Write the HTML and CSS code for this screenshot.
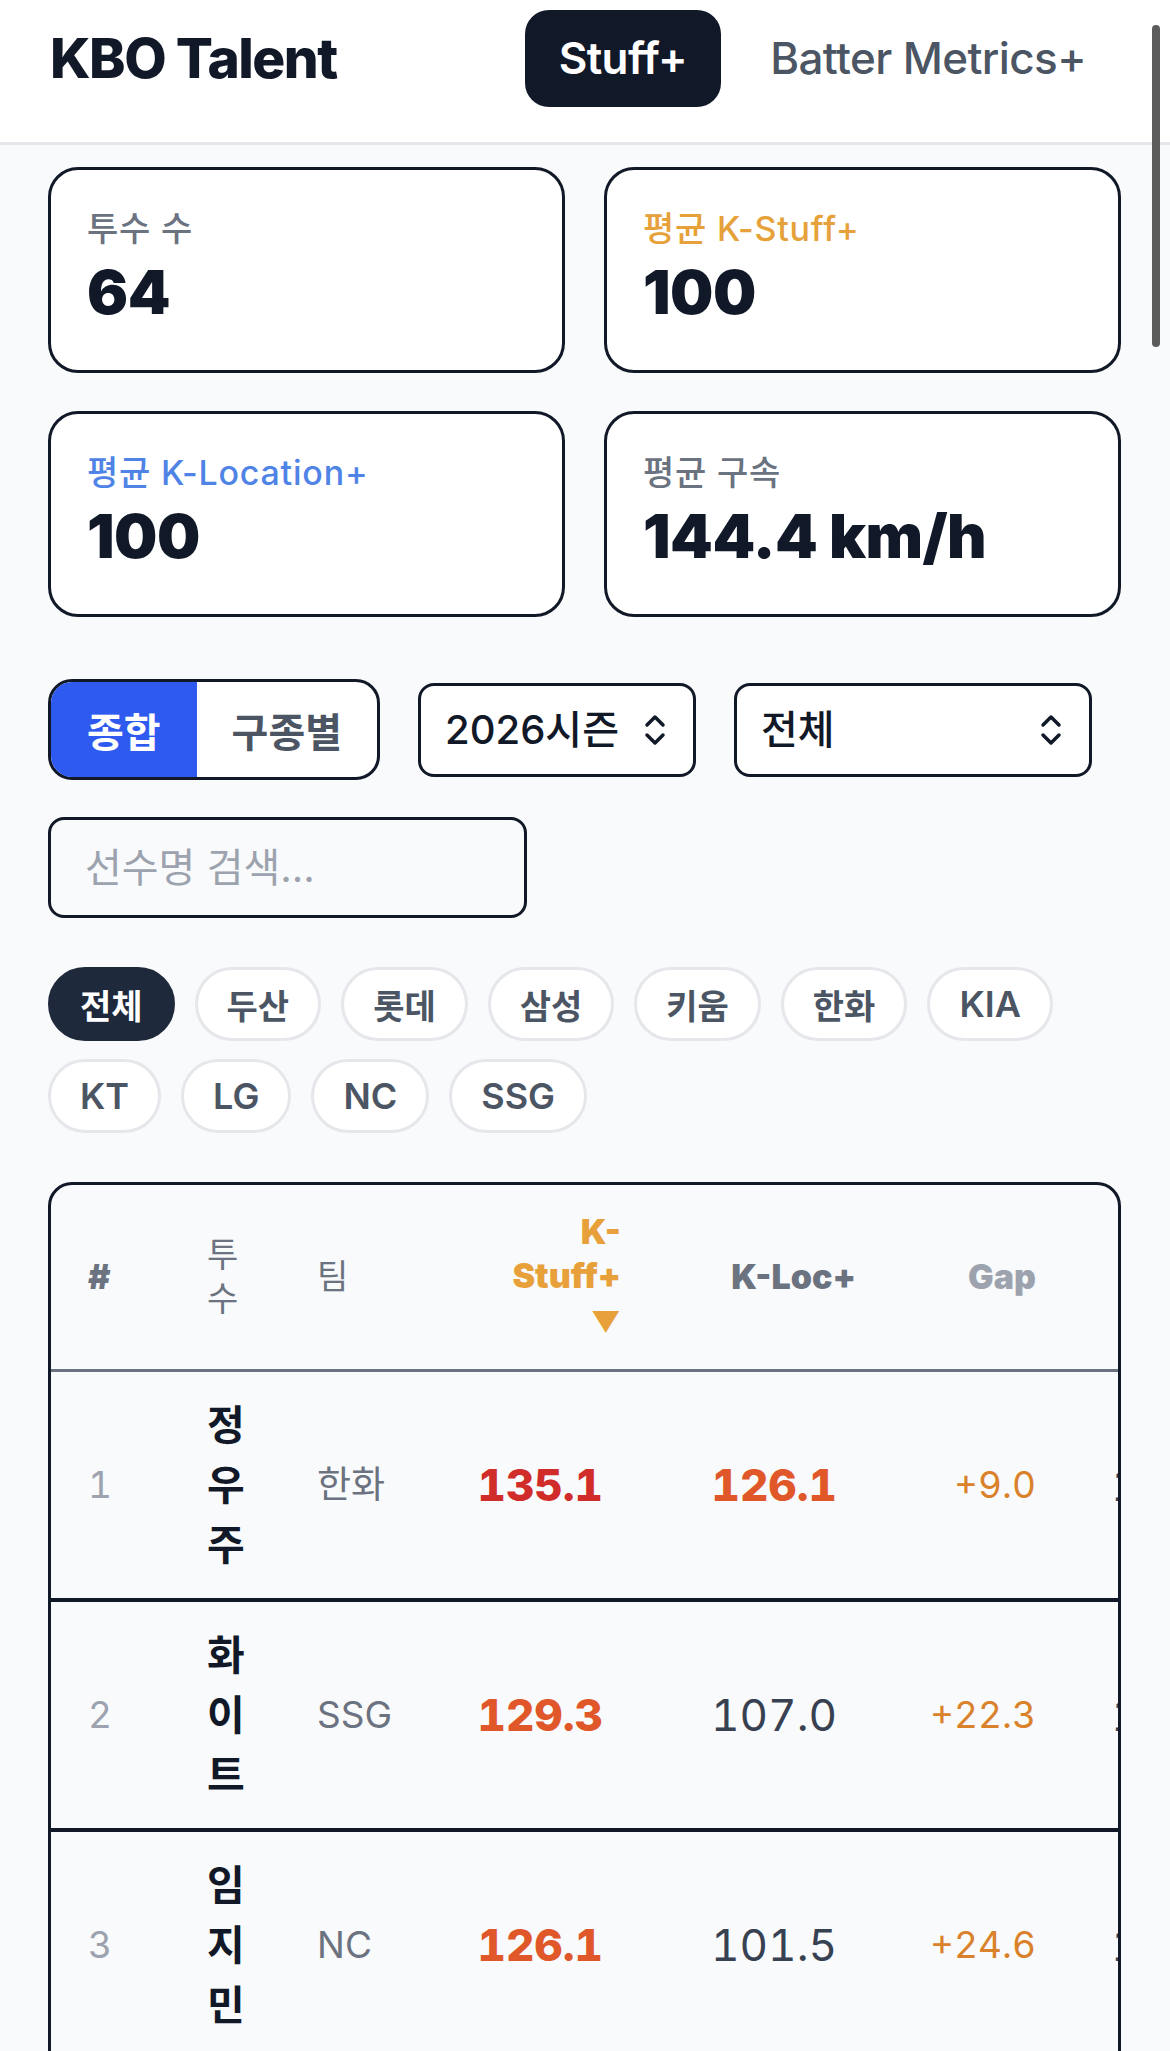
FILE: index.html
```html
<!DOCTYPE html>
<html lang="ko">

<head>
    <meta charset="UTF-8">
    <meta name="viewport" content="width=device-width, initial-scale=1.0">
    <title>KBO Talent - Stuff+</title>
    <link rel="stylesheet" href="styles.css">
</head>

<body>

    <header class="top-bar">
        <div class="brand">KBO Talent</div>
        <nav class="nav">
            <a class="nav-link active" href="#">Stuff+</a>
            <a class="nav-link" href="#">Batter Metrics+</a>
        </nav>
    </header>

    <div class="scroll-indicator"></div>

    <main class="page">

        <section class="stat-grid">
            <div class="stat-card">
                <div class="stat-label">투수 수</div>
                <div class="stat-value">64</div>
            </div>
            <div class="stat-card">
                <div class="stat-label stuff">평균 K-Stuff+</div>
                <div class="stat-value">100</div>
            </div>
            <div class="stat-card">
                <div class="stat-label location">평균 K-Location+</div>
                <div class="stat-value">100</div>
            </div>
            <div class="stat-card">
                <div class="stat-label">평균 구속</div>
                <div class="stat-value">144.4 km/h</div>
            </div>
        </section>

        <section class="controls">
            <div class="segmented">
                <button class="seg-btn active">종합</button>
                <button class="seg-btn">구종별</button>
            </div>
            <div class="select season">
                <select>
                    <option>2026시즌</option>
                    <option>2025시즌</option>
                </select>
                <svg width="24" height="34" viewBox="0 0 24 34" fill="none" stroke="#111827" stroke-width="3.5" stroke-linecap="round" stroke-linejoin="round">
                    <path d="M4 12 L12 4 L20 12" />
                    <path d="M4 22 L12 30 L20 22" />
                </svg>
            </div>
            <div class="select pitch">
                <select>
                    <option>전체</option>
                </select>
                <svg width="24" height="34" viewBox="0 0 24 34" fill="none" stroke="#111827" stroke-width="3.5" stroke-linecap="round" stroke-linejoin="round">
                    <path d="M4 12 L12 4 L20 12" />
                    <path d="M4 22 L12 30 L20 22" />
                </svg>
            </div>
        </section>

        <input class="search" type="text" placeholder="선수명 검색...">

        <section class="team-chips">
            <button class="chip active">전체</button>
            <button class="chip">두산</button>
            <button class="chip">롯데</button>
            <button class="chip">삼성</button>
            <button class="chip">키움</button>
            <button class="chip">한화</button>
            <button class="chip en">KIA</button>
            <button class="chip en">KT</button>
            <button class="chip en">LG</button>
            <button class="chip en">NC</button>
            <button class="chip en">SSG</button>
        </section>

        <div class="table-wrap">
            <table class="rank-table">
                <colgroup>
                    <col class="c-rank">
                    <col class="c-name">
                    <col class="c-team">
                    <col class="c-stuff">
                    <col class="c-loc">
                    <col class="c-gap">
                    <col class="c-velo">
                </colgroup>
                <thead>
                    <tr>
                        <th class="rank">#</th>
                        <th class="name light">투수</th>
                        <th class="light">팀</th>
                        <th class="num stuff-head">K-Stuff+ <span class="sort">▼</span></th>
                        <th class="num loc-head">K-Loc+</th>
                        <th class="num gap-head">Gap</th>
                        <th class="num velo">구속</th>
                    </tr>
                </thead>
                <tbody>
                    <tr>
                        <td class="rank">1</td>
                        <td class="name">정우주</td>
                        <td class="team">한화</td>
                        <td class="num stuff top">135.1</td>
                        <td class="num loc high">126.1</td>
                        <td class="num gap">+9.0</td>
                        <td class="num velo">153.2</td>
                    </tr>
                    <tr>
                        <td class="rank">2</td>
                        <td class="name">화이트</td>
                        <td class="team">SSG</td>
                        <td class="num stuff">129.3</td>
                        <td class="num loc">107.0</td>
                        <td class="num gap">+22.3</td>
                        <td class="num velo">151.8</td>
                    </tr>
                    <tr>
                        <td class="rank">3</td>
                        <td class="name">임지민</td>
                        <td class="team">NC</td>
                        <td class="num stuff">126.1</td>
                        <td class="num loc">101.5</td>
                        <td class="num gap">+24.6</td>
                        <td class="num velo">149.6</td>
                    </tr>
                    <tr>
                        <td class="rank">4</td>
                        <td class="name">원태인</td>
                        <td class="team">삼성</td>
                        <td class="num stuff">121.7</td>
                        <td class="num loc">110.2</td>
                        <td class="num gap">+11.5</td>
                        <td class="num velo">147.9</td>
                    </tr>
                </tbody>
            </table>
        </div>

    </main>

</body>

</html>
```

FILE: styles.css
```css
html {
    scrollbar-width: none;
}

body {
    margin: 0;
    background-color: #f9fafb;
    font-family: Inter, "Noto Sans CJK KR", sans-serif;
    color: #111827;
}

/* header */

.top-bar {
    display: flex;
    align-items: flex-start;
    justify-content: space-between;
    height: 145px;
    box-sizing: border-box;
    padding: 10px 49px 0 50px;
    background-color: #ffffff;
    border-bottom: 3px solid #e5e7eb;
}

.brand {
    line-height: 97px;
    font-size: 55px;
    font-weight: 800;
    letter-spacing: -1.5px;
}

.nav {
    display: flex;
    gap: 14px;
}

.nav-link {
    height: 97px;
    line-height: 97px;
    padding: 0 35px;
    border-radius: 24px;
    font-size: 44px;
    font-weight: 500;
    letter-spacing: -0.6px;
    color: #4b5563;
    text-decoration: none;
}

.nav-link.active {
    padding: 0 34px;
    background-color: #111827;
    color: #ffffff;
    font-weight: 600;
}

.scroll-indicator {
    position: fixed;
    top: 25px;
    right: 10px;
    width: 8px;
    height: 322px;
    border-radius: 4px;
    background-color: #5c5c5c;
}

/* page */

.page {
    padding: 22px 49px 0 48px;
}

.stat-grid {
    display: grid;
    grid-template-columns: 1fr 1fr;
    gap: 38px 39px;
}

.stat-card {
    padding: 36px 36px 42px;
    background-color: #ffffff;
    border: 3px solid #111827;
    border-radius: 30px;
}

.stat-label {
    font-size: 34px;
    line-height: 45px;
    font-weight: 500;
    letter-spacing: 0.8px;
    color: #6b7280;
}

.stat-label.stuff {
    color: #e6a13a;
}

.stat-label.location {
    color: #4f83e6;
}

.stat-value {
    margin-top: 5px;
    font-size: 61px;
    line-height: 72px;
    font-weight: 900;
    letter-spacing: -0.5px;
}

/* controls */

.controls {
    display: flex;
    align-items: center;
    gap: 38px;
    margin-top: 62px;
}

.segmented {
    display: flex;
    height: 101px;
    box-sizing: border-box;
    border: 3px solid #111827;
    border-radius: 24px;
    overflow: hidden;
    background-color: #ffffff;
}

.seg-btn {
    padding: 0 35px;
    border: none;
    background: none;
    font-family: inherit;
    font-size: 40px;
    font-weight: 700;
    color: #4b5563;
}

.seg-btn.active {
    padding: 0 36px;
    background-color: #2f5af0;
    color: #ffffff;
}

.select {
    display: flex;
    align-items: center;
    height: 94px;
    box-sizing: border-box;
    padding: 0 26px 0 0;
    background-color: #ffffff;
    border: 3px solid #111827;
    border-radius: 16px;
}

.select.season {
    width: 278px;
}

.select.pitch {
    width: 358px;
}

.select select {
    flex: 1;
    min-width: 0;
    height: 100%;
    padding: 0 0 0 24px;
    border: none;
    background: none;
    appearance: none;
    font-family: inherit;
    font-size: 40px;
    font-weight: 500;
    color: #111827;
    outline: none;
}

.search {
    display: block;
    width: 479px;
    height: 101px;
    box-sizing: border-box;
    margin-top: 37px;
    padding: 0 34px;
    border: 3px solid #111827;
    border-radius: 16px;
    background-color: #f9fafb;
    font-family: inherit;
    font-size: 40px;
}

.search::placeholder {
    color: #9ca3af;
}

/* team filter */

.team-chips {
    display: flex;
    flex-wrap: wrap;
    gap: 18px 20px;
    margin-top: 49px;
}

.chip {
    height: 74px;
    padding: 0 29px;
    border: 3px solid #e5e7eb;
    border-radius: 999px;
    background-color: #ffffff;
    font-family: inherit;
    font-size: 34px;
    font-weight: 600;
    color: #4b5563;
}

.chip.en {
    font-size: 36px;
}

.chip.active {
    background-color: #1e293b;
    border-color: #1e293b;
    color: #ffffff;
}

/* table */

.table-wrap {
    margin-top: 49px;
    border: 3px solid #111827;
    border-radius: 24px;
    overflow: hidden;
    background-color: #f9fafb;
}

.rank-table {
    width: 1204px;
    table-layout: fixed;
    border-collapse: collapse;
}

.c-rank { width: 138px; }
.c-name { width: 110px; }
.c-team { width: 141px; }
.c-stuff { width: 199px; }
.c-loc { width: 235px; }
.c-gap { width: 180px; }
.c-velo { width: 201px; }

.rank-table th,
.rank-table td {
    padding: 0 18px;
    text-align: left;
    vertical-align: middle;
}

.rank-table th {
    padding-top: 25px;
    padding-bottom: 25px;
    font-size: 34px;
    line-height: 44px;
    font-weight: 900;
    color: #6b7280;
    border-bottom: 3px solid #6b7280;
}

.rank-table th.light {
    font-weight: 400;
}

.rank-table td {
    padding-top: 23px;
    padding-bottom: 23px;
    line-height: 60px;
    font-size: 37px;
    font-variant-numeric: tabular-nums;
    border-bottom: 4px solid #111827;
}

.rank-table .rank {
    padding-left: 37px;
}

.rank-table .name {
    padding-right: 52px;
}

.rank-table .num {
    text-align: right;
}

.rank-table th.stuff-head {
    padding-left: 46px;
    color: #e8a13a;
}

.sort {
    font-size: 28px;
}

.rank-table th.gap-head {
    color: #9ca3af;
}

td.rank {
    color: #9ca3af;
}

td.name {
    font-size: 41px;
    font-weight: 700;
}

td.team {
    color: #6b7280;
}

td.stuff {
    padding-right: 36px;
    font-size: 44px;
    font-weight: 800;
    color: #e0582a;
}

td.stuff.top {
    color: #d02c2a;
}

td.loc {
    padding-right: 37px;
    font-size: 44px;
    color: #374151;
}

td.loc.high {
    font-weight: 800;
    color: #e0582a;
}

td.gap {
    color: #d9822b;
}

td.velo {
    font-size: 44px;
    color: #374151;
}
```
